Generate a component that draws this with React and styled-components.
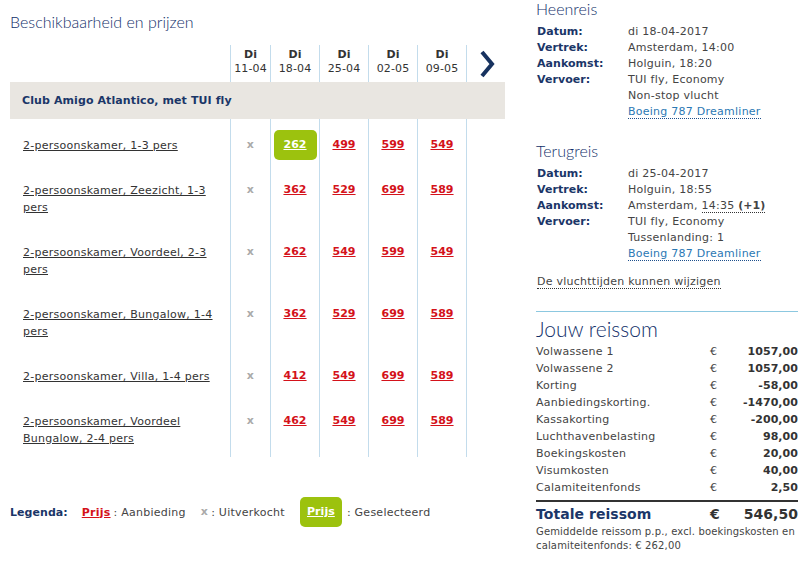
import React from "react";
import styled, { createGlobalStyle } from "styled-components";

const navy = "#1b3668";
const red = "#d4121a";
const green = "#9cc20e";
const rule = "#c3dcec";

const GlobalStyle = createGlobalStyle`
  body {
    margin: 0;
    background: #fff;
    font-family: "DejaVu Sans", Verdana, sans-serif;
    font-size: 11px;
    letter-spacing: 0.25px;
    color: #444;
  }

  b {
    letter-spacing: 0.05px;
  }
`;

const Page = styled.div`
  display: flex;
  gap: 31px;
  padding-left: 10px;
`;

const Availability = styled.section`
  width: 495px;
`;

const Heading = styled.h2`
  margin: ${(p) => p.$margin || "0"};
  font-family: Lato, "Open Sans", sans-serif;
  font-weight: 300;
  font-size: ${(p) => p.$size || 16}px;
  line-height: ${(p) => p.$lh || 18}px;
  letter-spacing: 0;
  color: #12306a;
`;

const Row = styled.div`
  display: grid;
  grid-template-columns: 220px 40px 49px 49px 49px 49px 39px;
`;

const HeadRow = styled(Row)`
  height: 37px;
`;

const DateCell = styled.div`
  border-left: 1px solid ${rule};
  text-align: center;
  padding-top: 3px;
  line-height: 14px;
  letter-spacing: 0.1px;
  color: #333;

  b {
    display: block;
    color: #333;
  }
`;

const NextCell = styled.div`
  border-left: 1px solid ${rule};
  display: flex;
  align-items: center;
  justify-content: center;
  padding-left: 2px;
`;

const GroupRow = styled.div`
  height: 37px;
  line-height: 37px;
  padding-left: 12px;
  background: #e9e6e1;
  font-weight: bold;
  letter-spacing: 0.1px;
  color: ${navy};
`;

const NameCell = styled.div`
  padding: 18px 13px 10px 13px;
  line-height: 17px;
`;

const RoomLink = styled.a`
  color: #333;
  text-decoration: underline;
`;

const PriceCell = styled.div`
  border-left: 1px solid ${rule};
  padding-top: 11px;
  text-align: center;
  line-height: 0;
`;

const Price = styled.a`
  display: inline-block;
  width: 43px;
  height: 30px;
  line-height: 30px;
  border-radius: 5px;
  text-align: center;
  font-weight: bold;
  letter-spacing: 0.05px;
  text-decoration: underline;
  color: ${(p) => (p.$selected ? "#fff" : red)};
  background: ${(p) => (p.$selected ? green : "transparent")};
`;

const SoldOut = styled.span`
  display: inline-block;
  line-height: 30px;
  font-weight: bold;
  color: #aaa;
`;

const Legend = styled.div`
  display: flex;
  align-items: center;
  height: 30px;
  margin-top: 40px;
  color: #444;
`;

const LegendLabel = styled.b`
  color: ${navy};
  margin-right: 14px;
`;

const LegendItem = styled.span`
  display: inline-flex;
  align-items: center;
  gap: ${(p) => p.$gap || 3}px;
  margin-right: 15px;
`;

const LegendPrice = styled.a`
  font-weight: bold;
  text-decoration: underline;
  color: ${red};
`;

const LegendSelected = styled(Price)`
  width: 42px;
`;

const Summary = styled.aside`
  width: 262px;
`;

const InfoGrid = styled.div`
  display: grid;
  grid-template-columns: 91px 1fr;
  line-height: 16px;
  padding-left: 1px;
  margin-top: 6px;

  dt {
    font-weight: bold;
    letter-spacing: 0.05px;
    color: ${navy};
  }

  dd {
    margin: 0;
    grid-column: 2;
  }
`;

const PlaneLink = styled.a`
  color: #2b78b4;
  text-decoration: none;
  border-bottom: 1px dotted #1d4f8c;
`;

const Dotted = styled.span`
  border-bottom: 1px dotted #333;
`;

const Notice = styled.div`
  margin-top: 12px;
  padding-left: 1px;
  line-height: 16px;
`;

const Total = styled.div`
  margin-top: 21px;
  border-top: 1px solid #8cc8e0;
  padding-top: 5px;
`;

const CostList = styled.div`
  margin-top: 2px;
`;

const CostRow = styled.div`
  display: grid;
  grid-template-columns: 174px 1fr auto;
  line-height: 17px;
  color: #444;

  b {
    text-align: right;
    color: #333;
  }
`;

const GrandTotal = styled(CostRow)`
  margin-top: 4px;
  border-top: 2px solid #333;
  padding-top: 1px;
  line-height: 22px;
  font-size: 14px;
  font-weight: bold;
  letter-spacing: 0.05px;
  color: ${navy};

  span:nth-child(2),
  b {
    color: #333;
  }
`;

const Footnote = styled.p`
  margin: 0;
  font-size: 10px;
  line-height: 14px;
  letter-spacing: 0.15px;
  color: #444;
`;

const dates = ["11-04", "18-04", "25-04", "02-05", "09-05"];

const rooms = [
  { name: "2-persoonskamer, 1-3 pers", prices: [262, 499, 599, 549], selected: 0 },
  { name: "2-persoonskamer, Zeezicht, 1-3 pers", prices: [362, 529, 699, 589] },
  { name: "2-persoonskamer, Voordeel, 2-3 pers", prices: [262, 549, 599, 549] },
  { name: "2-persoonskamer, Bungalow, 1-4 pers", prices: [362, 529, 699, 589] },
  { name: "2-persoonskamer, Villa, 1-4 pers", prices: [412, 549, 699, 589] },
  { name: "2-persoonskamer, Voordeel Bungalow, 2-4 pers", prices: [462, 549, 699, 589] },
];

const costs = [
  ["Volwassene 1", "1057,00"],
  ["Volwassene 2", "1057,00"],
  ["Korting", "-58,00"],
  ["Aanbiedingskorting.", "-1470,00"],
  ["Kassakorting", "-200,00"],
  ["Luchthavenbelasting", "98,00"],
  ["Boekingskosten", "20,00"],
  ["Visumkosten", "40,00"],
  ["Calamiteitenfonds", "2,50"],
];

function Chevron() {
  return (
    <svg width="16" height="28" viewBox="0 0 16 28">
      <path d="M3 2 L13 14 L3 26" fill="none" stroke="#17325f" strokeWidth="4" />
    </svg>
  );
}

function Flight({ title, rows, plane, margin }) {
  return (
    <>
      <Heading $margin={margin}>{title}</Heading>
      <InfoGrid>
        {rows.map(([label, value], i) =>
          label ? (
            <React.Fragment key={i}>
              <dt>{label}</dt>
              <dd>{value}</dd>
            </React.Fragment>
          ) : (
            <dd key={i}>{value}</dd>
          )
        )}
        <dd>
          <PlaneLink href="#">{plane}</PlaneLink>
        </dd>
      </InfoGrid>
    </>
  );
}

export default function App() {
  return (
    <>
      <GlobalStyle />
      <Page>
        <Availability>
          <Heading $margin="13px 0 14px">Beschikbaarheid en prijzen</Heading>
          <HeadRow>
            <div />
            {dates.map((d) => (
              <DateCell key={d}>
                <b>Di</b>
                {d}
              </DateCell>
            ))}
            <NextCell>
              <Chevron />
            </NextCell>
          </HeadRow>
          <GroupRow>Club Amigo Atlantico, met TUI fly</GroupRow>
          {rooms.map((room) => (
            <Row key={room.name}>
              <NameCell>
                <RoomLink href="#">{room.name}</RoomLink>
              </NameCell>
              <PriceCell>
                <SoldOut>x</SoldOut>
              </PriceCell>
              {room.prices.map((p, i) => (
                <PriceCell key={i}>
                  <Price href="#" $selected={room.selected === i}>
                    {p}
                  </Price>
                </PriceCell>
              ))}
              <PriceCell />
            </Row>
          ))}
          <Legend>
            <LegendLabel>Legenda:</LegendLabel>
            <LegendItem>
              <LegendPrice href="#">Prijs</LegendPrice> : Aanbieding
            </LegendItem>
            <LegendItem>
              <SoldOut>x</SoldOut> : Uitverkocht
            </LegendItem>
            <LegendItem $gap={5}>
              <LegendSelected href="#" $selected>
                Prijs
              </LegendSelected>
              : Geselecteerd
            </LegendItem>
          </Legend>
        </Availability>

        <Summary>
          <Flight
            title="Heenreis"
            rows={[
              ["Datum:", "di 18-04-2017"],
              ["Vertrek:", "Amsterdam, 14:00"],
              ["Aankomst:", "Holguin, 18:20"],
              ["Vervoer:", "TUI fly, Economy"],
              [null, "Non-stop vlucht"],
            ]}
            plane="Boeing 787 Dreamliner"
          />
          <Flight
            title="Terugreis"
            margin="22px 0 0"
            rows={[
              ["Datum:", "di 25-04-2017"],
              ["Vertrek:", "Holguin, 18:55"],
              [
                "Aankomst:",
                <>
                  Amsterdam, <Dotted>14:35 <b>(+1)</b></Dotted>
                </>,
              ],
              ["Vervoer:", "TUI fly, Economy"],
              [null, "Tussenlanding: 1"],
            ]}
            plane="Boeing 787 Dreamliner"
          />
          <Notice>
            <Dotted>De vluchttijden kunnen wijzigen</Dotted>
          </Notice>

          <Total>
            <Heading $size={21} $lh={24}>
              Jouw reissom
            </Heading>
            <CostList>
              {costs.map(([label, amount]) => (
                <CostRow key={label}>
                  <span>{label}</span>
                  <span>€</span>
                  <b>{amount}</b>
                </CostRow>
              ))}
            </CostList>
            <GrandTotal>
              <span>Totale reissom</span>
              <span>€</span>
              <b>546,50</b>
            </GrandTotal>
            <Footnote>
              Gemiddelde reissom p.p., excl. boekingskosten en calamiteitenfonds: € 262,00
            </Footnote>
          </Total>
        </Summary>
      </Page>
    </>
  );
}
